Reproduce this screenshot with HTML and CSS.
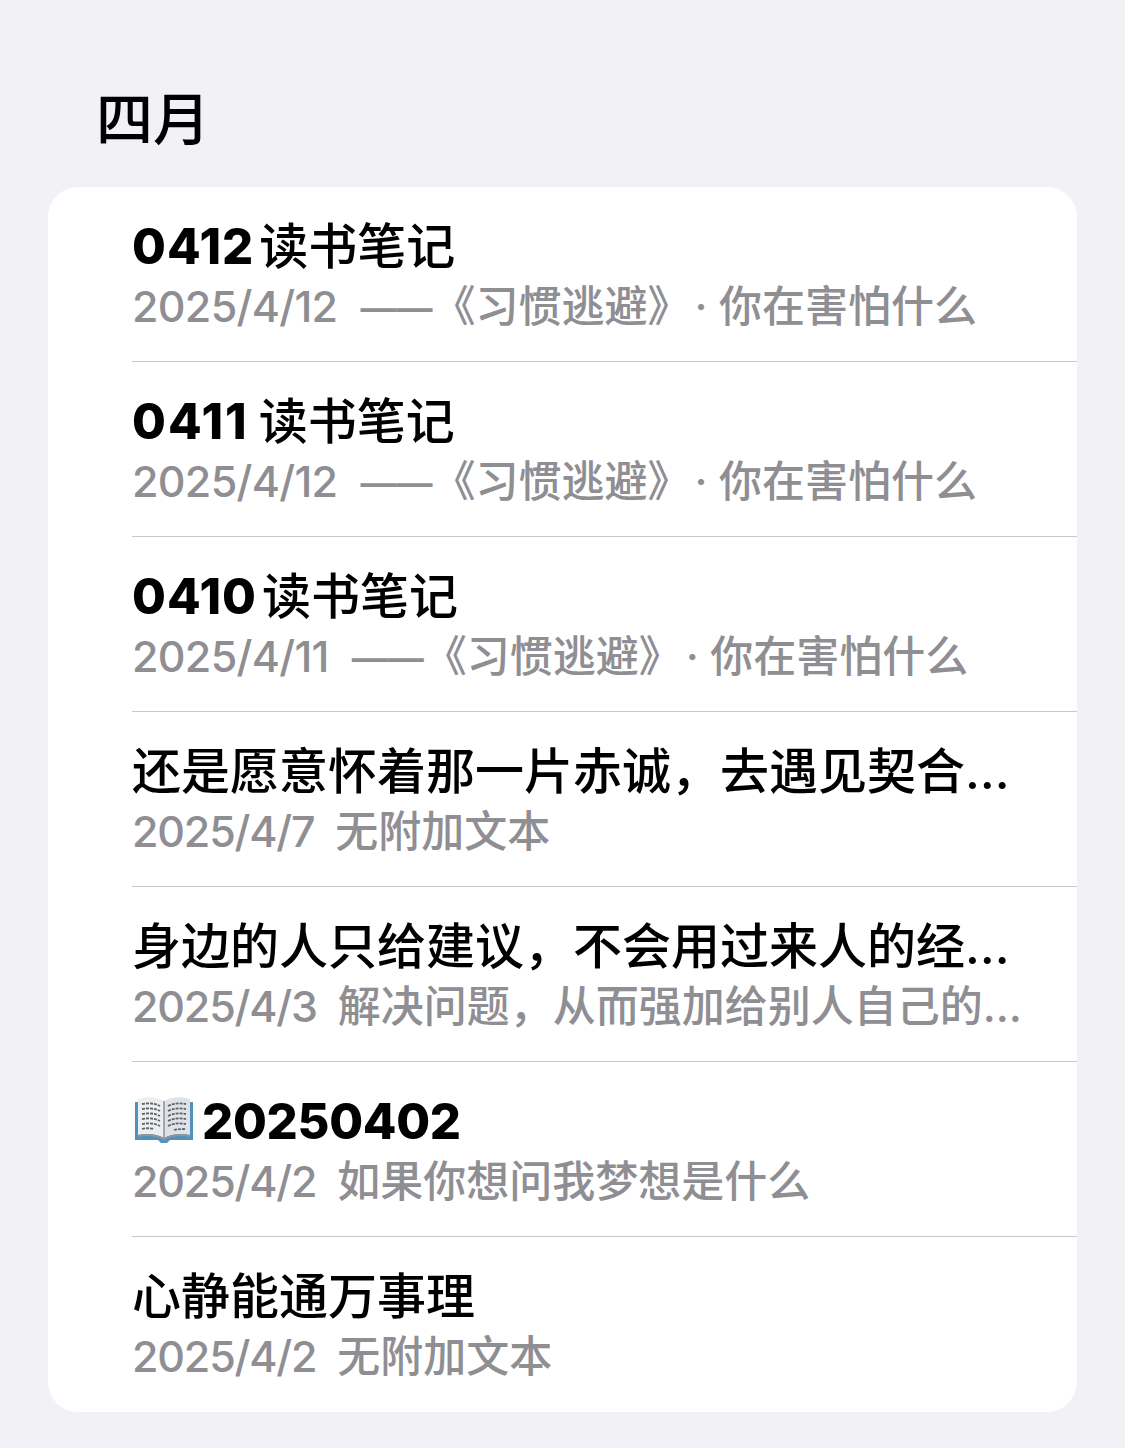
FILE: index.html
```html
<!DOCTYPE html>
<html lang="zh-CN">
<head>
    <meta charset="UTF-8">
    <title>四月</title>
    <link rel="stylesheet" href="styles.css">
</head>
<body>
    <h1 class="month">四月</h1>
    <ul class="notes">
        <li class="note">
            <div class="title"><span class="num short">0412</span><span>读书笔记</span></div>
            <div class="sub"><span class="date">2025/4/12</span><span class="text"><span class="dash">——</span>《习惯逃避》<span class="dot">·</span> 你在害怕什么</span></div>
        </li>
        <li class="note">
            <div class="title"><span class="num ones">0411</span><span>读书笔记</span></div>
            <div class="sub"><span class="date">2025/4/12</span><span class="text"><span class="dash">——</span>《习惯逃避》<span class="dot">·</span> 你在害怕什么</span></div>
        </li>
        <li class="note">
            <div class="title"><span class="num short">0410</span><span>读书笔记</span></div>
            <div class="sub"><span class="date">2025/4/11</span><span class="text"><span class="dash">——</span>《习惯逃避》<span class="dot">·</span> 你在害怕什么</span></div>
        </li>
        <li class="note">
            <div class="title">还是愿意怀着那一片赤诚，去遇见契合…</div>
            <div class="sub"><span class="date single">2025/4/7</span><span class="text">无附加文本</span></div>
        </li>
        <li class="note">
            <div class="title">身边的人只给建议，不会用过来人的经…</div>
            <div class="sub"><span class="date single">2025/4/3</span><span class="text">解决问题，从而强加给别人自己的…</span></div>
        </li>
        <li class="note">
            <div class="title">
                <svg class="book" viewBox="0 0 60 48">
                    <path d="M1 6h58v38H36l-3 3h-6l-3-3H1z" fill="#4f93bd"/>
                    <path d="M4 3c9-3 19-2 26 2v37c-7-4-17-5-26-3z" fill="#eceef0"/>
                    <path d="M56 3c-9-3-19-2-26 2v37c7-4 17-5 26-3z" fill="#dfe2e6"/>
                    <path d="M4 39c9-2 19-1 26 3c7-4 17-5 26-3v2c-9-2-19-1-26 3c-7-4-17-5-26-3z" fill="#8f959c"/>
                    <path d="M8 8c6-1 12-1 18 2M8 13c6-1 12-1 18 2M8 18c6-1 12-1 18 2M8 23c6-1 12-1 18 2M8 28c6-1 12-1 18 2M8 33c4-1 8-1 12 0M34 10c6-3 12-3 18-2M34 15c6-3 12-3 18-2M34 20c6-3 12-3 18-2M34 25c6-3 12-3 18-2M34 30c6-3 12-3 18-2M40 34c4-1 8-1 12-1" fill="none" stroke="#5f646b" stroke-width="1.8" stroke-dasharray="3 1"/>
                    <path d="M30 5v37" stroke="#8d929a" stroke-width="1.5"/>
                </svg><span class="num long">20250402</span>
            </div>
            <div class="sub"><span class="date single">2025/4/2</span><span class="text">如果你想问我梦想是什么</span></div>
        </li>
        <li class="note">
            <div class="title">心静能通万事理</div>
            <div class="sub"><span class="date single">2025/4/2</span><span class="text">无附加文本</span></div>
        </li>
    </ul>
</body>
</html>
```

FILE: styles.css
```css
* {
    box-sizing: border-box;
}
body {
    margin: 0;
    height: 1448px;
    overflow: hidden;
    padding: 0 48px;
    background-color: #f1f1f6;
    font-family: "Inter", "Noto Sans CJK SC", sans-serif;
    color: #000;
    text-spacing-trim: space-all;
}
.month {
    margin: 0;
    padding: 85px 0 0 48px;
    height: 187px;
    font-size: 57px;
    line-height: 70px;
    font-weight: 500;
}
.notes {
    list-style-type: none;
    margin: 0;
    padding: 0;
    background-color: white;
    border-radius: 30px;
    width: 1029px;
}
.note {
    height: 175px;
    margin-left: 84px;
    padding-top: 32px;
    border-bottom: 1px solid #c8c8cb;
}
.note:last-child {
    border-bottom: 0;
}
.title {
    display: flex;
    align-items: center;
    gap: 5px;
    height: 56px;
    font-size: 49px;
    line-height: 56px;
    font-weight: 500;
    white-space: nowrap;
}
.num {
    font-weight: 800;
}
.short {
    letter-spacing: 1px;
}
.ones {
    letter-spacing: 2px;
    margin-right: 5px;
}
.long {
    letter-spacing: -0.3px;
}
.book {
    width: 60px;
    height: 48px;
    margin: -4px 3px 0 2px;
}
.sub {
    display: flex;
    gap: 23px;
    height: 60px;
    margin-top: 1px;
    font-size: 43px;
    line-height: 60px;
    font-weight: 500;
    color: #8e8e93;
    white-space: nowrap;
}
.date {
    letter-spacing: -0.7px;
}
.single {
    letter-spacing: -1.2px;
    margin-right: -2px;
}
.dash {
    font-family: "Liberation Sans", sans-serif;
    font-size: 36px;
    font-weight: 700;
    vertical-align: 2px;
}
.dot {
    margin-left: 4px;
}
```
